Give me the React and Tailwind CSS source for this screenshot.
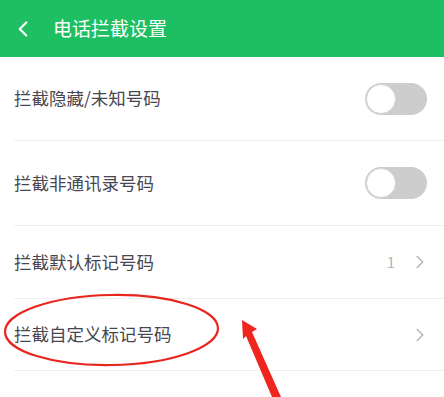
import { ChevronLeft, ChevronRight } from "lucide-react";

const font = { fontFamily: '"Noto Sans CJK SC", "Noto Sans", sans-serif' };

function Toggle() {
  return (
    <div className="relative h-[32px] w-[62px] rounded-full bg-[#cdcdcd]">
      <div className="absolute left-[1px] top-[1px] h-[30px] w-[30px] rounded-full border border-[#d6d6d6] bg-white" />
    </div>
  );
}

function Row({ label, height, children }) {
  return (
    <div
      className={`ml-[14px] flex items-center justify-between border-b border-[#efefef] pr-[17px] ${height}`}
    >
      <span className="text-[17.5px] text-[#474752]">{label}</span>
      {children}
    </div>
  );
}

export default function App() {
  return (
    <div className="relative h-[397px] w-[444px] overflow-hidden bg-white" style={font}>
      {/* Header */}
      <div className="flex h-[57px] items-center bg-[#1dbf62] text-white">
        <ChevronLeft className="ml-[10px] h-[26px] w-[26px]" strokeWidth={2} />
        <span className="ml-[17px] text-[19px]">电话拦截设置</span>
      </div>

      <Row label="拦截隐藏/未知号码" height="h-[84px]">
        <Toggle />
      </Row>
      <Row label="拦截非通讯录号码" height="h-[85px]">
        <Toggle />
      </Row>
      <Row label="拦截默认标记号码" height="h-[73px]">
        <div className="flex items-center gap-[14px] text-[#b5b5b5]">
          <span className="text-[15px]">1</span>
          <ChevronRight className="-mr-[4px] h-[22px] w-[22px]" strokeWidth={1.6} />
        </div>
      </Row>
      <Row label="拦截自定义标记号码" height="h-[72px]">
        <ChevronRight className="-mr-[4px] h-[22px] w-[22px] text-[#b5b5b5]" strokeWidth={1.6} />
      </Row>
      <div className="ml-[14px] h-[72px] border-b border-[#efefef]" />

      {/* annotation overlay */}
      <svg className="pointer-events-none absolute left-0 top-0" width="444" height="397">
        <ellipse cx="111.5" cy="330" rx="106.5" ry="35" fill="none" stroke="#e8261e" strokeWidth="2.2" transform="rotate(-1 111.5 330)" />
        <polygon points="242,320 257,329 252,332 281,397 272,397 246,336 243,339" fill="#f0251d" />
      </svg>
    </div>
  );
}
